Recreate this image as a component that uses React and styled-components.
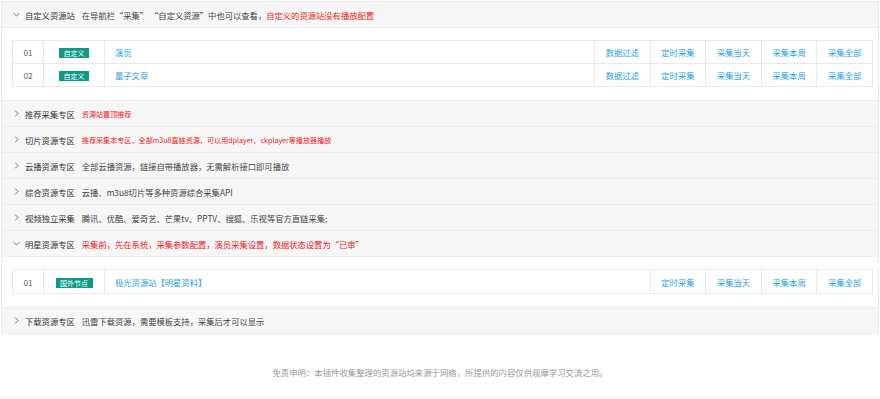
import React from "react";
import styled, { createGlobalStyle } from "styled-components";

const Global = createGlobalStyle`
  html, body { margin: 0; padding: 0; background: #fff; }
  body { font-family: "Noto Sans CJK SC", "Noto Sans", sans-serif; color: #333; }
`;

const Page = styled.div`
  padding-top: 1px;
`;

const Collapse = styled.div`
  margin: 0 1px 0 1px;
  border: 1px solid #ececec;
  border-top: 0;
`;

const Item = styled.div`
  border-top: 1px solid #ececec;
`;

const Title = styled.div`
  height: 25px;
  background: #f6f6f6;
  display: flex;
  align-items: center;
  padding-left: 11px;
  font-size: 8.3px;
  line-height: 12px;
  white-space: nowrap;
`;

const Chevron = styled.svg`
  width: 7px;
  height: 7px;
  margin-right: 5px;
  flex: none;
`;

const Name = styled.span`
  color: #333;
  margin-right: 7px;
`;

const Desc = styled.span`
  color: ${(p) => (p.$red ? "#f02020" : "#444")};
  font-size: ${(p) => (p.$small ? "7.1px" : "8.3px")};
`;

const Content = styled.div`
  border-top: 1px solid #ececec;
  padding: 12px 5px 13px 10px;
  background: #fff;
`;

const Table = styled.table`
  width: 100%;
  border-collapse: collapse;
  table-layout: fixed;
  font-size: 8.3px;
`;

const Td = styled.td`
  border: 1px solid #e8e8e8;
  height: ${(p) => (p.$tall ? "23px" : "22px")};
  padding: 0;
  text-align: ${(p) => (p.$left ? "left" : "center")};
  padding-left: ${(p) => (p.$left ? "10px" : "0")};
  color: #666;
  vertical-align: middle;
`;

const Tag = styled.span`
  display: inline-block;
  background: #0f9a86;
  color: #fff;
  font-size: 7px;
  line-height: 10px;
  height: 10px;
  padding: 0 4.5px;
  vertical-align: middle;
`;

const Link = styled.a`
  color: #2a9fe0;
  text-decoration: none;
`;

const Footer = styled.div`
  padding-top: 32px;
  padding-bottom: 19px;
  text-align: center;
  font-size: 8.4px;
  line-height: 12px;
  color: #999;
  border-bottom: 1px solid #eee;
`;

const Arrow = ({ open }) => (
  <Chevron viewBox="0 0 8 8">
    {open ? (
      <polyline points="0.8,2.5 4,5.7 7.2,2.5" fill="none" stroke="#666" strokeWidth="1" />
    ) : (
      <polyline points="2.5,0.8 5.7,4 2.5,7.2" fill="none" stroke="#666" strokeWidth="1" />
    )}
  </Chevron>
);

const ResourceTable = ({ rows, actions, tall }) => (
  <Table>
    <colgroup>
      <col style={{ width: 31 }} />
      <col style={{ width: 61 }} />
      <col />
      {actions.map((a) => (
        <col key={a} style={{ width: 55.6 }} />
      ))}
    </colgroup>
    <tbody>
      {rows.map((r) => (
        <tr key={r.no}>
          <Td $tall={tall}>{r.no}</Td>
          <Td $tall={tall}>
            <Tag>{r.tag}</Tag>
          </Td>
          <Td $tall={tall} $left>
            <Link>{r.name}</Link>
          </Td>
          {actions.map((a) => (
            <Td $tall={tall} key={a}>
              <Link>{a}</Link>
            </Td>
          ))}
        </tr>
      ))}
    </tbody>
  </Table>
);

export default function App() {
  return (
    <Page>
      <Global />
      <Collapse>
        <Item>
          <Title>
            <Arrow open />
            <Name>自定义资源站</Name>
            <Desc>在导航栏“采集” “自定义资源”中也可以查看，</Desc>
            <Desc $red>自定义的资源站没有播放配置</Desc>
          </Title>
          <Content>
            <ResourceTable
              rows={[
                { no: "01", tag: "自定义", name: "演员" },
                { no: "02", tag: "自定义", name: "量子文章" },
              ]}
              actions={["数据过滤", "定时采集", "采集当天", "采集本周", "采集全部"]}
            />
          </Content>
        </Item>
        <Item>
          <Title>
            <Arrow />
            <Name>推荐采集专区</Name>
            <Desc $red $small>资源站置顶推荐</Desc>
          </Title>
        </Item>
        <Item>
          <Title>
            <Arrow />
            <Name>切片资源专区</Name>
            <Desc $red $small>推荐采集本专区，全部m3u8直链资源，可以用dplayer、ckplayer等播放器播放</Desc>
          </Title>
        </Item>
        <Item>
          <Title>
            <Arrow />
            <Name>云播资源专区</Name>
            <Desc>全部云播资源，链接自带播放器，无需解析接口即可播放</Desc>
          </Title>
        </Item>
        <Item>
          <Title>
            <Arrow />
            <Name>综合资源专区</Name>
            <Desc>云播、m3u8切片等多种资源综合采集API</Desc>
          </Title>
        </Item>
        <Item>
          <Title>
            <Arrow />
            <Name>视频独立采集</Name>
            <Desc>腾讯、优酷、爱奇艺、芒果tv、PPTV、搜狐、乐视等官方直链采集;</Desc>
          </Title>
        </Item>
        <Item>
          <Title>
            <Arrow open />
            <Name>明星资源专区</Name>
            <Desc $red>采集前，先在系统，采集参数配置，演员采集设置，数据状态设置为“已审”</Desc>
          </Title>
          <Content>
            <ResourceTable
              tall
              rows={[{ no: "01", tag: "国外节点", name: "极光资源站【明星资料】" }]}
              actions={["定时采集", "采集当天", "采集本周", "采集全部"]}
            />
          </Content>
        </Item>
        <Item>
          <Title>
            <Arrow />
            <Name>下载资源专区</Name>
            <Desc>迅雷下载资源，需要模板支持，采集后才可以显示</Desc>
          </Title>
        </Item>
      </Collapse>
      <Footer>免责申明：本插件收集整理的资源站均来源于网络，所提供的内容仅供观摩学习交流之用。</Footer>
    </Page>
  );
}
